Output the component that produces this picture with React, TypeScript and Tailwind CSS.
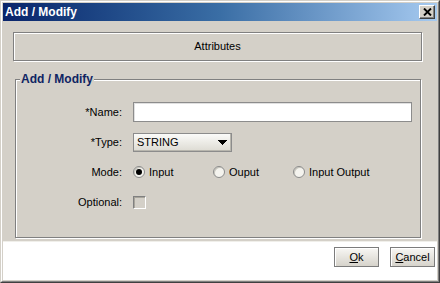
import { useState } from 'react';

// raised 3d edge, classic windows look
const raised =
  'border border-t-white border-l-white border-r-[#404040] border-b-[#404040] shadow-[inset_-1px_-1px_0_#808080]';

function Radio({ checked, label }: { checked: boolean; label: string }) {
  return (
    <label className="flex w-[80px] items-center gap-[4px]">
      <span className="flex h-[12px] w-[12px] items-center justify-center rounded-full border border-[#8a8a8a] bg-[#f4f3ee] shadow-[inset_1px_1px_0_#c8c6bd]">
        {checked && <span className="h-[6px] w-[6px] rounded-full bg-black" />}
      </span>
      <span>{label}</span>
    </label>
  );
}

export default function App() {
  const [mode] = useState('Input');

  return (
    <div className="h-[283px] w-[440px] border border-t-[#d4d0c8] border-l-[#d4d0c8] border-r-[#404040] border-b-[#404040] bg-[#d4d0c8] font-['Liberation_Sans',Arial,sans-serif] text-[11px] text-black">
      <div className="flex h-full flex-col border border-t-white border-l-white border-r-[#808080] border-b-[#808080] p-[1px]">
        {/* 标题栏 */}
        <div className="flex h-[18px] shrink-0 items-center justify-between bg-gradient-to-r from-[#0a246a] via-[#3a6ea5] to-[#a6caf0] pl-[2px] pr-[2px]">
          <span className="text-[12px] font-bold leading-none text-white">Add / Modify</span>
          <button className={`flex h-[14px] w-[16px] items-center justify-center bg-[#d4d0c8] ${raised}`}>
            <svg width="9" height="8" viewBox="0 0 9 8">
              <path d="M1 0.5 L8 7.5 M8 0.5 L1 7.5" stroke="#000" strokeWidth="1.9" />
            </svg>
          </button>
        </div>

        {/* 主体 */}
        <div className="flex h-[220px] shrink-0 flex-col pl-[10px] pt-[11px]">
          <div className="flex h-[29px] w-[409px] items-center justify-center border border-[#808080] shadow-[inset_1px_1px_0_#fff,1px_1px_0_#fff]">
            Attributes
          </div>

          <fieldset className="ml-[2px] mt-[11px] w-[406px] border border-[#808080] pb-[25px] pr-[8px] pt-[16px] shadow-[inset_1px_1px_0_#fff,1px_1px_0_#fff]">
            <legend className="ml-[4px] bg-[#d4d0c8] px-[1px] text-[12px] font-bold leading-[14px] text-[#0f2463]">
              Add / Modify
            </legend>
            <div className="grid grid-cols-[106px_1fr] gap-x-[11px] gap-y-[10px]">
              <div className="flex h-[20px] items-center justify-end">*Name:</div>
              <div className="h-[20px] border border-[#8c8c8c] bg-white shadow-[inset_1px_1px_0_#e0e0e0]" />

              <div className="flex h-[20px] items-center justify-end">*Type:</div>
              <div className="flex h-[20px] items-center">
                <div className="flex h-[19px] w-[99px] items-center justify-between border border-[#8c8c8c] bg-gradient-to-b from-[#fbfbf9] to-[#dddbd3] pl-[3px] pr-[4px] shadow-[inset_-1px_-1px_0_#b8b6ae]">
                  <span>STRING</span>
                  <svg width="9" height="5" viewBox="0 0 9 5" shapeRendering="crispEdges">
                    <path d="M0 0h9v1h-1v1h-1v1h-1v1h-1v1h-1v-1h-1v-1h-1v-1h-1v-1h-1z" fill="#000" />
                  </svg>
                </div>
              </div>

              <div className="flex h-[20px] items-center justify-end">Mode:</div>
              <div className="flex h-[20px] items-center">
                <Radio checked={mode === 'Input'} label="Input" />
                <Radio checked={mode === 'Ouput'} label="Ouput" />
                <Radio checked={mode === 'Input Output'} label="Input Output" />
              </div>

              <div className="flex h-[20px] items-center justify-end">Optional:</div>
              <div className="flex h-[20px] items-center">
                <span className="h-[13px] w-[13px] border border-t-[#808080] border-l-[#808080] border-r-white border-b-white bg-[#d4d0c8] shadow-[inset_1px_1px_0_#a8a59c]" />
              </div>
            </div>
          </fieldset>
        </div>

        {/* 按钮区 */}
        <div className="flex flex-1 items-start justify-end gap-[11px] border-t border-t-[#f0efea] bg-white pr-[2px] pt-[5px]">
          <button className="h-[20px] w-[45px] border border-[#7c7c7c] bg-gradient-to-b from-[#f8f7f4] to-[#d6d3cb] shadow-[inset_1px_1px_0_#fff]">
            <span className="underline underline-offset-1">O</span>k
          </button>
          <button className="h-[20px] w-[45px] border border-[#7c7c7c] bg-gradient-to-b from-[#f8f7f4] to-[#d6d3cb] shadow-[inset_1px_1px_0_#fff]">
            <span className="underline underline-offset-1">C</span>ancel
          </button>
        </div>
      </div>
    </div>
  );
}
